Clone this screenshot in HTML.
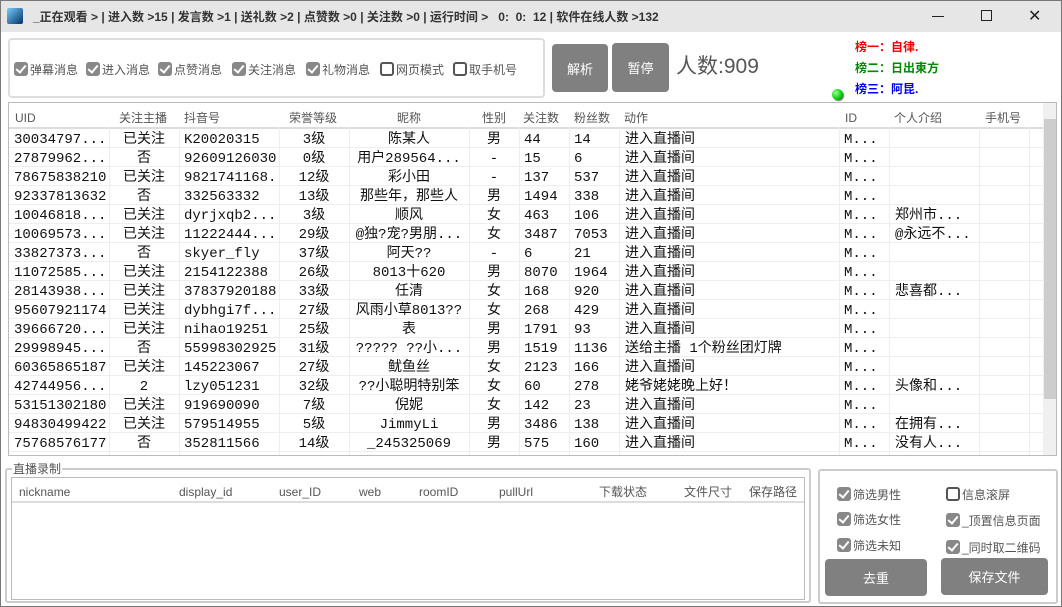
<!DOCTYPE html>
<html><head><meta charset="utf-8"><style>
*{box-sizing:border-box;margin:0;padding:0}
body{width:1062px;height:607px;position:relative;overflow:hidden;background:#fff;font-family:"Liberation Sans","Noto Sans CJK SC",sans-serif;color:#222}
.a{position:absolute}
#title{left:0;top:0;width:1062px;height:32px;background:#e6e6e6;border-left:1px solid #777;border-right:1px solid #777;border-top:1px solid #777}
#title .t{left:32px;top:8px;font-size:12px;line-height:16px;font-weight:bold;color:#333;white-space:nowrap}
.cb{display:inline-block;width:14px;height:14px;border-radius:3px;vertical-align:-2px;margin-right:2px}
.cb.on{background:#888;position:relative}
.cb.on:after{content:"";position:absolute;left:4px;top:1px;width:4px;height:8px;border:solid #fff;border-width:0 2px 2px 0;transform:rotate(40deg)}
.cb.off{border:2px solid #555;background:#fff}
.lbl{font-size:12px;line-height:16px;color:#555;white-space:nowrap}
.btn{background:#808080;border-radius:4px;color:#fff;font-size:13px;display:flex;align-items:center;justify-content:center}
.grid{left:8px;top:102px;width:1049px;height:354px;border:1px solid #bbb;overflow:hidden}
.h{position:absolute;top:7px;font-size:12px;line-height:16px;color:#555;white-space:nowrap}
.r{position:absolute;left:0;width:1034px;height:19px;border-bottom:1px solid #eee;font-family:"Liberation Mono","Noto Sans CJK SC",monospace;font-size:14px;color:#111}
.r span{position:absolute;top:2px;height:17px;line-height:18px;white-space:nowrap;overflow:hidden}
.vl{position:absolute;top:24px;width:1px;height:330px;background:#eee}
</style></head><body>
<div id="title" class="a">
 <div class="a" style="left:6px;top:7px;width:16px;height:16px;background:linear-gradient(135deg,#7cf,#036);border-radius:2px"></div>
 <div class="a t">_正在观看 &gt; | 进入数 &gt;15 | 发言数 &gt;1 | 送礼数 &gt;2 | 点赞数 &gt;0 | 关注数 &gt;0 | 运行时间 &gt;&nbsp;&nbsp; 0:&nbsp; 0:&nbsp; 12 | 软件在线人数 &gt;132</div>
 <div class="a" style="left:931px;top:15px;width:12px;height:1px;background:#222"></div>
 <div class="a" style="left:980px;top:9px;width:11px;height:11px;border:1px solid #222"></div>
 <div class="a" style="left:1027px;top:7px;font-size:16px;line-height:18px;color:#222">✕</div>
</div>
<div class="a" style="left:0;top:32px;width:1px;height:575px;background:#777"></div>
<div class="a" style="left:1061px;top:32px;width:1px;height:575px;background:#777"></div>
<div class="a" style="left:0;top:606px;width:1062px;height:1px;background:#777"></div>

<div class="a" style="left:8px;top:38px;width:537px;height:60px;border:2px solid #ddd;border-radius:4px"></div>
<div class="a lbl" style="left:14px;top:62px"><span class="cb on"></span>弹幕消息</div>
<div class="a lbl" style="left:86px;top:62px"><span class="cb on"></span>进入消息</div>
<div class="a lbl" style="left:158px;top:62px"><span class="cb on"></span>点赞消息</div>
<div class="a lbl" style="left:232px;top:62px"><span class="cb on"></span>关注消息</div>
<div class="a lbl" style="left:306px;top:62px"><span class="cb on"></span>礼物消息</div>
<div class="a lbl" style="left:380px;top:62px"><span class="cb off"></span>网页模式</div>
<div class="a lbl" style="left:453px;top:62px"><span class="cb off"></span>取手机号</div>
<div class="a btn" style="left:552px;top:44px;width:56px;height:48px">解析</div>
<div class="a btn" style="left:612px;top:43px;width:57px;height:49px">暂停</div>
<div class="a" style="left:676px;top:54px;font-size:21px;line-height:26px;color:#555">人数:909</div>
<div class="a" style="left:855px;top:39px;font-size:12px;line-height:16px;font-weight:bold;color:#e00">榜一：自律.</div>
<div class="a" style="left:855px;top:60px;font-size:12px;line-height:16px;font-weight:bold;color:#080">榜二：日出東方</div>
<div class="a" style="left:855px;top:81px;font-size:12px;line-height:16px;font-weight:bold;color:#00e">榜三：阿昆.</div>
<div class="a" style="left:832px;top:89px;width:11px;height:11px;border-radius:50%;background:radial-gradient(circle at 35% 35%,#9f9,#0c0 60%,#060);box-shadow:1px 1px 1px #666"></div>

<div class="a grid">
 <div class="h" style="left:6px">UID</div>
 <div class="h" style="left:110px">关注主播</div>
 <div class="h" style="left:175px">抖音号</div>
 <div class="h" style="left:280px">荣誉等级</div>
 <div class="h" style="left:388px">昵称</div>
 <div class="h" style="left:473px">性别</div>
 <div class="h" style="left:514px">关注数</div>
 <div class="h" style="left:565px">粉丝数</div>
 <div class="h" style="left:615px">动作</div>
 <div class="h" style="left:836px">ID</div>
 <div class="h" style="left:885px">个人介绍</div>
 <div class="h" style="left:976px">手机号</div>
 <div class="a" style="left:0;top:24px;width:1034px;height:2px;background:#ddd"></div>
 <div class="vl" style="left:100px"></div><div class="vl" style="left:170px"></div><div class="vl" style="left:270px"></div><div class="vl" style="left:340px"></div><div class="vl" style="left:460px"></div><div class="vl" style="left:510px"></div><div class="vl" style="left:560px"></div><div class="vl" style="left:610px"></div><div class="vl" style="left:830px"></div><div class="vl" style="left:880px"></div><div class="vl" style="left:970px"></div><div class="vl" style="left:1020px"></div>
 <div class="a" style="left:1034px;top:0;width:14px;height:352px;background:#f0f0f0"></div>
 <div class="a" style="left:1035px;top:16px;width:12px;height:280px;background:#cdcdcd"></div>
 <div id="rows"></div>
</div>

<div class="a" style="left:5px;top:468px;width:806px;height:135px;border:2px solid #ccc;border-radius:3px"></div>
<div class="a" style="left:12px;top:461px;font-size:12px;line-height:16px;color:#555;background:#fff;padding:0 1px">直播录制</div>
<div class="a" style="left:11px;top:477px;width:794px;height:123px;border:1px solid #bbb"></div>
<div class="a" style="left:12px;top:501px;width:792px;height:2px;background:#ddd"></div>
<div class="a lbl" style="left:19px;top:484px">nickname</div>
<div class="a lbl" style="left:179px;top:484px">display_id</div>
<div class="a lbl" style="left:279px;top:484px">user_ID</div>
<div class="a lbl" style="left:359px;top:484px">web</div>
<div class="a lbl" style="left:419px;top:484px">roomID</div>
<div class="a lbl" style="left:499px;top:484px">pullUrl</div>
<div class="a lbl" style="left:599px;top:484px">下载状态</div>
<div class="a lbl" style="left:684px;top:484px">文件尺寸</div>
<div class="a lbl" style="left:749px;top:484px">保存路径</div>

<div class="a" style="left:818px;top:469px;width:240px;height:135px;border:2px solid #ccc;border-radius:3px"></div>
<div class="a lbl" style="left:837px;top:487px"><span class="cb on"></span>筛选男性</div>
<div class="a lbl" style="left:837px;top:512px"><span class="cb on"></span>筛选女性</div>
<div class="a lbl" style="left:837px;top:538px"><span class="cb on"></span>筛选未知</div>
<div class="a lbl" style="left:946px;top:487px"><span class="cb off"></span>信息滚屏</div>
<div class="a lbl" style="left:946px;top:513px"><span class="cb on"></span>_顶置信息页面</div>
<div class="a lbl" style="left:946px;top:540px"><span class="cb on"></span>_同时取二维码</div>
<div class="a btn" style="left:825px;top:559px;width:102px;height:37px">去重</div>
<div class="a btn" style="left:941px;top:558px;width:107px;height:37px">保存文件</div>

<script>
var d=[
["30034797...","已关注","K20020315","3级","陈某人","男","44","14","进入直播间","M...",""],
["27879962...","否","92609126030","0级","用户289564...","-","15","6","进入直播间","M...",""],
["78675838210","已关注","9821741168.","12级","彩小田","-","137","537","进入直播间","M...",""],
["92337813632","否","332563332","13级","那些年，那些人","男","1494","338","进入直播间","M...",""],
["10046818...","已关注","dyrjxqb2...","3级","顺风","女","463","106","进入直播间","M...","郑州市..."],
["10069573...","已关注","11222444...","29级","@独?宠?男朋...","女","3487","7053","进入直播间","M...","@永远不..."],
["33827373...","否","skyer_fly","37级","阿天??","-","6","21","进入直播间","M...",""],
["11072585...","已关注","2154122388","26级","8013十620","男","8070","1964","进入直播间","M...",""],
["28143938...","已关注","37837920188","33级","任清","女","168","920","进入直播间","M...","悲喜都..."],
["95607921174","已关注","dybhgi7f...","27级","风雨小草8013??","女","268","429","进入直播间","M...",""],
["39666720...","已关注","nihao19251","25级","表","男","1791","93","进入直播间","M...",""],
["29998945...","否","55998302925","31级","????? ??小...","男","1519","1136","送给主播 1个粉丝团灯牌","M...",""],
["60365865187","已关注","145223067","27级","鱿鱼丝","女","2123","166","进入直播间","M...",""],
["42744956...","2","lzy051231","32级","??小聪明特别笨","女","60","278","姥爷姥姥晚上好！","M...","头像和..."],
["53151302180","已关注","919690090","7级","倪妮","女","142","23","进入直播间","M...",""],
["94830499422","已关注","579514955","5级","JimmyLi","男","3486","138","进入直播间","M...","在拥有..."],
["75768576177","否","352811566","14级","_245325069","男","575","160","进入直播间","M...","没有人..."]];
var cols=[[5,95,0],[100,70,1],[175,95,0],[270,70,1],[340,120,1],[460,50,1],[515,45,0],[565,45,0],[616,214,0],[835,45,0],[886,84,0]];
var h="";
d.forEach(function(r,i){h+='<div class="r" style="top:'+(26+i*19)+'px">';
r.forEach(function(c,j){var k=cols[j];h+='<span style="left:'+k[0]+'px;width:'+k[1]+'px;'+(k[2]?'text-align:center':'')+'">'+c+'</span>';});h+='</div>';});
document.getElementById("rows").innerHTML=h;
</script>
</body></html>
